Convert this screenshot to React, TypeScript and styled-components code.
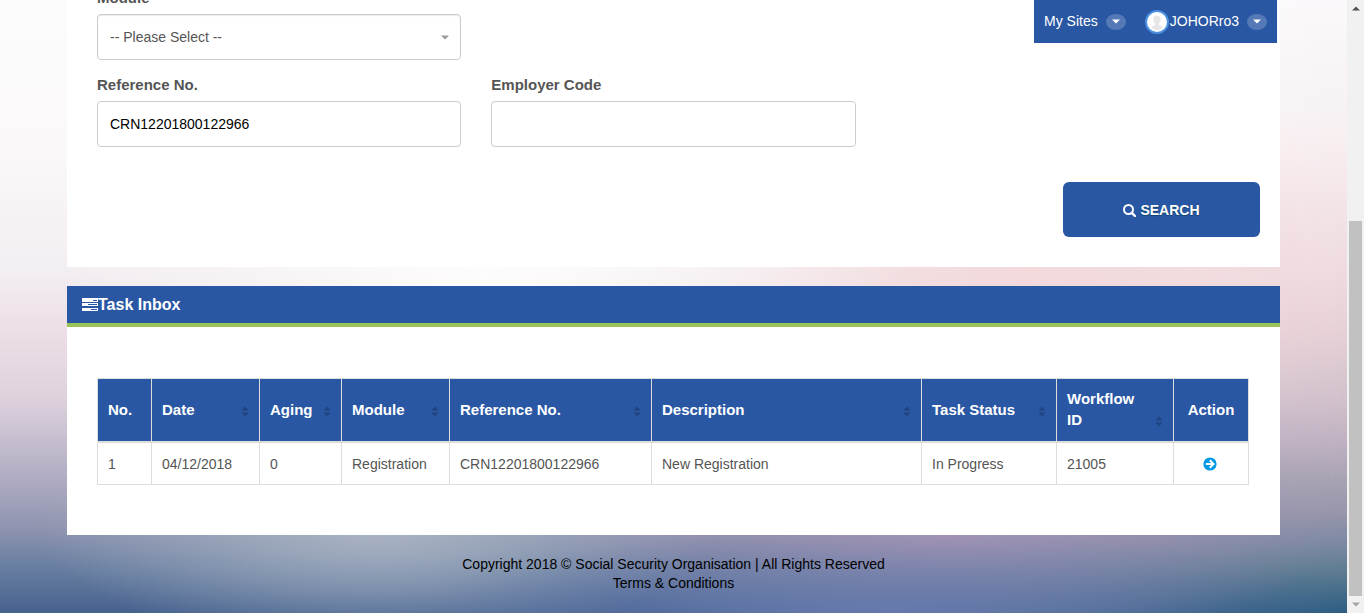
import React from 'react';
import styled, { createGlobalStyle } from 'styled-components';

const blue = '#2957a4';
const line = '#dddddd';

const GlobalStyle = createGlobalStyle`
  *, *::before, *::after { box-sizing: border-box; }
  body {
    margin: 0;
    font: 14px/21px "Liberation Sans", Arial, sans-serif;
    color: #555;
  }
  a { color: inherit; text-decoration: none; }
`;

const Page = styled.div`
  display: grid;
  grid-template-columns: minmax(0, 1fr) 17px;
  min-height: 100vh;
`;

const Backdrop = styled.div`
  position: relative;
  isolation: isolate;
  padding: 0 67px;
  overflow: hidden;
  background: linear-gradient(180deg, #fcfcfc 0%, #fbf8f9 25%, #f3eef1 44%, #ecdfe7 54%, #ddd1dc 65%, #b8b2c7 76%, #8f94b0 86%, #6b80a2 92%, #46628f 100%);

  &::before, &::after {
    content: '';
    position: absolute;
    inset: 0;
  }
  &::before {
    z-index: -2;
    background: linear-gradient(180deg, #fbf9fb 0%, #f7f2f3 18%, #f8eff1 22%, #f2e3e6 35%, #eedbdf 45%, #e5d0d6 54%, #d2c1cc 65%, #bfb1c1 72%, #a8a3b3 78%, #9a97ac 83%, #808aa5 88%, #5f7d92 93%, #2b5c80 100%);
    mask-image: linear-gradient(90deg, transparent 45%, #000 100%);
  }
  &::after {
    z-index: -1;
    background:
      radial-gradient(ellipse 480px 90px at 66% 101%, rgba(104, 124, 176, 0.9), rgba(104, 124, 176, 0)),
      radial-gradient(ellipse 400px 110px at 70% 87%, rgba(172, 150, 182, 0.8), rgba(172, 150, 182, 0)),
      radial-gradient(ellipse 340px 120px at 28% 86%, rgba(174, 184, 198, 0.9), rgba(174, 184, 198, 0)),
      radial-gradient(ellipse 420px 160px at 36% 45%, rgba(254, 253, 253, 0.95), rgba(254, 253, 253, 0)),
      radial-gradient(ellipse 360px 200px at 76% 45%, rgba(244, 214, 215, 0.75), rgba(244, 214, 215, 0));
  }
`;

const TopMenu = styled.nav`
  position: absolute;
  top: 0;
  right: 70px;
  z-index: 1;
  display: flex;
  align-items: center;
  justify-content: space-between;
  width: 243px;
  height: 43px;
  padding: 0 10px;
  background: ${blue};
  color: #fff;
`;

const MenuButton = styled.button`
  display: flex;
  align-items: center;
  padding: 0;
  border: 0;
  background: none;
  color: inherit;
  font: inherit;
`;

const Pill = styled.span`
  display: flex;
  align-items: center;
  justify-content: center;
  width: 20px;
  height: 16px;
  margin-left: 8px;
  border-radius: 50%;
  background: #5479b6;
`;

const Panel = styled.section`
  background: #fff;
`;

const SearchForm = styled.form`
  padding: 0 30px 30px;
`;

const FieldGrid = styled.div`
  display: grid;
  grid-template-columns: repeat(3, minmax(0, 1fr));
  gap: 14px 30px;
  margin-top: -13px;
`;

const Field = styled.div<{ $start?: boolean }>`
  display: flex;
  flex-direction: column;
  gap: 6px;
  ${(p) => p.$start && 'grid-column-start: 1;'}
`;

const Label = styled.label`
  font-size: 15px;
  font-weight: bold;
`;

const controlStyle = `
  width: 100%;
  height: 46px;
  padding: 0 12px;
  border: 1px solid #ccc;
  border-radius: 4px;
  background: #fff;
  font: inherit;
`;

const TextInput = styled.input`
  ${controlStyle}
  color: #000;
`;

const SelectWrap = styled.div`
  display: grid;
  align-items: center;
  > * { grid-area: 1 / 1; }
  > svg { justify-self: end; margin-right: 12px; pointer-events: none; }
`;

const Select = styled.select`
  ${controlStyle}
  appearance: none;
  color: #555;
  box-shadow: inset 0 1px 1px rgba(0, 0, 0, 0.08);
`;

const Actions = styled.div`
  display: flex;
  justify-content: flex-end;
  margin: 35px -10px 0 0;
`;

const SearchButton = styled.button`
  display: flex;
  align-items: center;
  justify-content: center;
  gap: 4px;
  width: 197px;
  height: 55px;
  padding: 2px 0 0;
  border: 0;
  border-radius: 6px;
  background: ${blue};
  color: #fff;
  font: bold 14px/21px "Liberation Sans", Arial, sans-serif;
  text-shadow: 0 1px 1px rgba(0, 60, 80, 0.7);
`;

const InboxPanel = styled(Panel)`
  margin-top: 19px;
`;

const PanelTitle = styled.h2`
  display: flex;
  align-items: center;
  height: 41px;
  margin: 0;
  padding: 0 15px;
  border-bottom: 4px solid #9bc458;
  background: ${blue};
  color: #fff;
  font-size: 16px;
`;

const TableArea = styled.div`
  padding: 51px 31px 50px 30px;
`;

const Table = styled.table`
  width: 100%;
  table-layout: fixed;
  border-collapse: collapse;
`;

const Th = styled.th`
  padding: 9px 10px 11px;
  border: 1px solid ${line};
  border-bottom-width: 2px;
  background: ${blue};
  color: #fff;
  font-size: 15px;
  text-align: left;
`;

const HeadCell = styled.div<{ $center?: boolean }>`
  display: flex;
  align-items: flex-end;
  justify-content: ${(p) => (p.$center ? 'center' : 'space-between')};
  gap: 10px;
  > svg { flex: none; margin-bottom: 3px; }
`;

const Td = styled.td<{ $center?: boolean }>`
  padding: 11px 10px 9px;
  border: 1px solid ${line};
  text-align: ${(p) => (p.$center ? 'center' : 'left')};
`;

const TaskLink = styled.a`
  display: flex;
  justify-content: center;
  padding-right: 2px;
`;

const Footer = styled.footer`
  padding: 20px 0;
  color: #000;
  line-height: 19px;
  text-align: center;
`;

const ScrollTrack = styled.div`
  position: sticky;
  top: 0;
  display: flex;
  flex-direction: column;
  height: 100vh;
  background: #f1f1f1;
`;

const ScrollArrow = styled.div`
  display: flex;
  align-items: center;
  justify-content: center;
  height: 17px;
`;

const ScrollGap = styled.div`
  flex: 204;
`;

const ScrollThumb = styled.div`
  flex: 375;
  margin: 0 2px;
  background: #c1c1c1;
`;

const Caret = ({ color = '#fff', up = false }: { color?: string; up?: boolean }) => (
  <svg width="8" height="5" viewBox="0 0 8 5" aria-hidden="true">
    <path d={up ? 'M0 4.5h8L4 .5z' : 'M0 .5h8L4 4.5z'} fill={color} />
  </svg>
);

const SortIcon = () => (
  <svg width="8" height="11" viewBox="0 0 8 11" aria-hidden="true">
    <path d="M0.500 4.500h7L4 .5zM0.500 6.500h7L4 10.500z" fill="#21457f" />
  </svg>
);

const Avatar = () => (
  <svg width="24" height="24" viewBox="0 0 24 24" aria-hidden="true">
    <circle cx="12" cy="12" r="11" fill="#fff" stroke="#4a8fe0" strokeWidth="2" />
    <path d="M12 5.500c2.300 0 3.700 1.600 3.700 4 0 1.500-.6 2.800-1.500 3.700v2l3.300 1.600c-.9 2-3 3.500-5.500 3.500s-4.600-1.500-5.500-3.500l3.300-1.600v-2c-.9-.9-1.500-2.200-1.500-3.700 0-2.400 1.400-4 3.700-4z" fill="#e6e6e6" />
  </svg>
);

const SearchIcon = () => (
  <svg width="13" height="13" viewBox="0 0 13 13" fill="none" stroke="#fff" aria-hidden="true">
    <circle cx="5.500" cy="5.500" r="4.500" strokeWidth="2" />
    <path d="M8.800 8.800L12 12" strokeWidth="2.400" strokeLinecap="round" />
  </svg>
);

const TasksIcon = () => (
  <svg width="16" height="14" viewBox="0 0 16 14" shapeRendering="crispEdges" aria-hidden="true">
    <path d="M0 0h16v4H0zM0 5h16v3H0zM0 10h16v3H0z" fill="#fff" />
    <path d="M11 2h4v1h-4zM6 6h9v1H6zM9 11h6v1H9z" fill={blue} />
  </svg>
);

const GoIcon = () => (
  <svg width="14" height="21" viewBox="0 -3 14 21" aria-hidden="true">
    <circle cx="7" cy="7" r="6.600" fill="#0099e5" />
    <path d="M2.800 7h7M6.800 3.300L10.500 7l-3.700 3.700" fill="none" stroke="#fff" strokeWidth="2" />
  </svg>
);

const columns = [
  { title: 'No.', width: 54, sortable: false },
  { title: 'Date', width: 108, sortable: true },
  { title: 'Aging', width: 82, sortable: true },
  { title: 'Module', width: 108, sortable: true },
  { title: 'Reference No.', width: 202, sortable: true },
  { title: 'Description', width: 270, sortable: true },
  { title: 'Task Status', width: 135, sortable: true },
  { title: 'Workflow ID', width: 117, sortable: true },
  { title: 'Action', width: 75, sortable: false },
];

const Col = styled.col<{ $width: number }>`
  width: ${(p) => p.$width}px;
`;

const tasks = [
  ['1', '04/12/2018', '0', 'Registration', 'CRN12201800122966', 'New Registration', 'In Progress', '21005'],
];

export default function App() {
  return (
    <>
      <GlobalStyle />
      <Page>
        <Backdrop>
          <TopMenu>
            <MenuButton type="button">
              My Sites
              <Pill><Caret /></Pill>
            </MenuButton>
            <MenuButton type="button">
              <Avatar />
              <span>&#8202;JOHORro3</span>
              <Pill><Caret /></Pill>
            </MenuButton>
          </TopMenu>

          <Panel>
            <SearchForm onSubmit={(e) => e.preventDefault()}>
              <FieldGrid>
                <Field>
                  <Label htmlFor="module">Module</Label>
                  <SelectWrap>
                    <Select id="module">
                      <option>-- Please Select --</option>
                    </Select>
                    <Caret color="#999" />
                  </SelectWrap>
                </Field>
                <Field $start>
                  <Label htmlFor="reference">Reference No.</Label>
                  <TextInput id="reference" defaultValue="CRN12201800122966" />
                </Field>
                <Field>
                  <Label htmlFor="employer">Employer Code</Label>
                  <TextInput id="employer" />
                </Field>
              </FieldGrid>
              <Actions>
                <SearchButton type="submit">
                  <SearchIcon />
                  SEARCH
                </SearchButton>
              </Actions>
            </SearchForm>
          </Panel>

          <InboxPanel>
            <PanelTitle>
              <TasksIcon />
              Task Inbox
            </PanelTitle>
            <TableArea>
              <Table>
                <colgroup>
                  {columns.map((c) => <Col key={c.title} $width={c.width} />)}
                </colgroup>
                <thead>
                  <tr>
                    {columns.map((c) => (
                      <Th key={c.title} scope="col">
                        <HeadCell $center={c.title === 'Action'}>
                          {c.title}
                          {c.sortable && <SortIcon />}
                        </HeadCell>
                      </Th>
                    ))}
                  </tr>
                </thead>
                <tbody>
                  {tasks.map((row) => (
                    <tr key={row[0]}>
                      {row.map((value, i) => <Td key={columns[i].title}>{value}</Td>)}
                      <Td $center>
                        <TaskLink href="#open" aria-label="Open task"><GoIcon /></TaskLink>
                      </Td>
                    </tr>
                  ))}
                </tbody>
              </Table>
            </TableArea>
          </InboxPanel>

          <Footer>
            <div>Copyright 2018 © Social Security Organisation | All Rights Reserved</div>
            <a href="#terms">Terms &amp; Conditions</a>
          </Footer>
        </Backdrop>
        <ScrollTrack aria-hidden="true">
          <ScrollArrow><Caret color="#505050" up /></ScrollArrow>
          <ScrollGap />
          <ScrollThumb />
          <ScrollArrow><Caret color="#a3a3a3" /></ScrollArrow>
        </ScrollTrack>
      </Page>
    </>
  );
}
